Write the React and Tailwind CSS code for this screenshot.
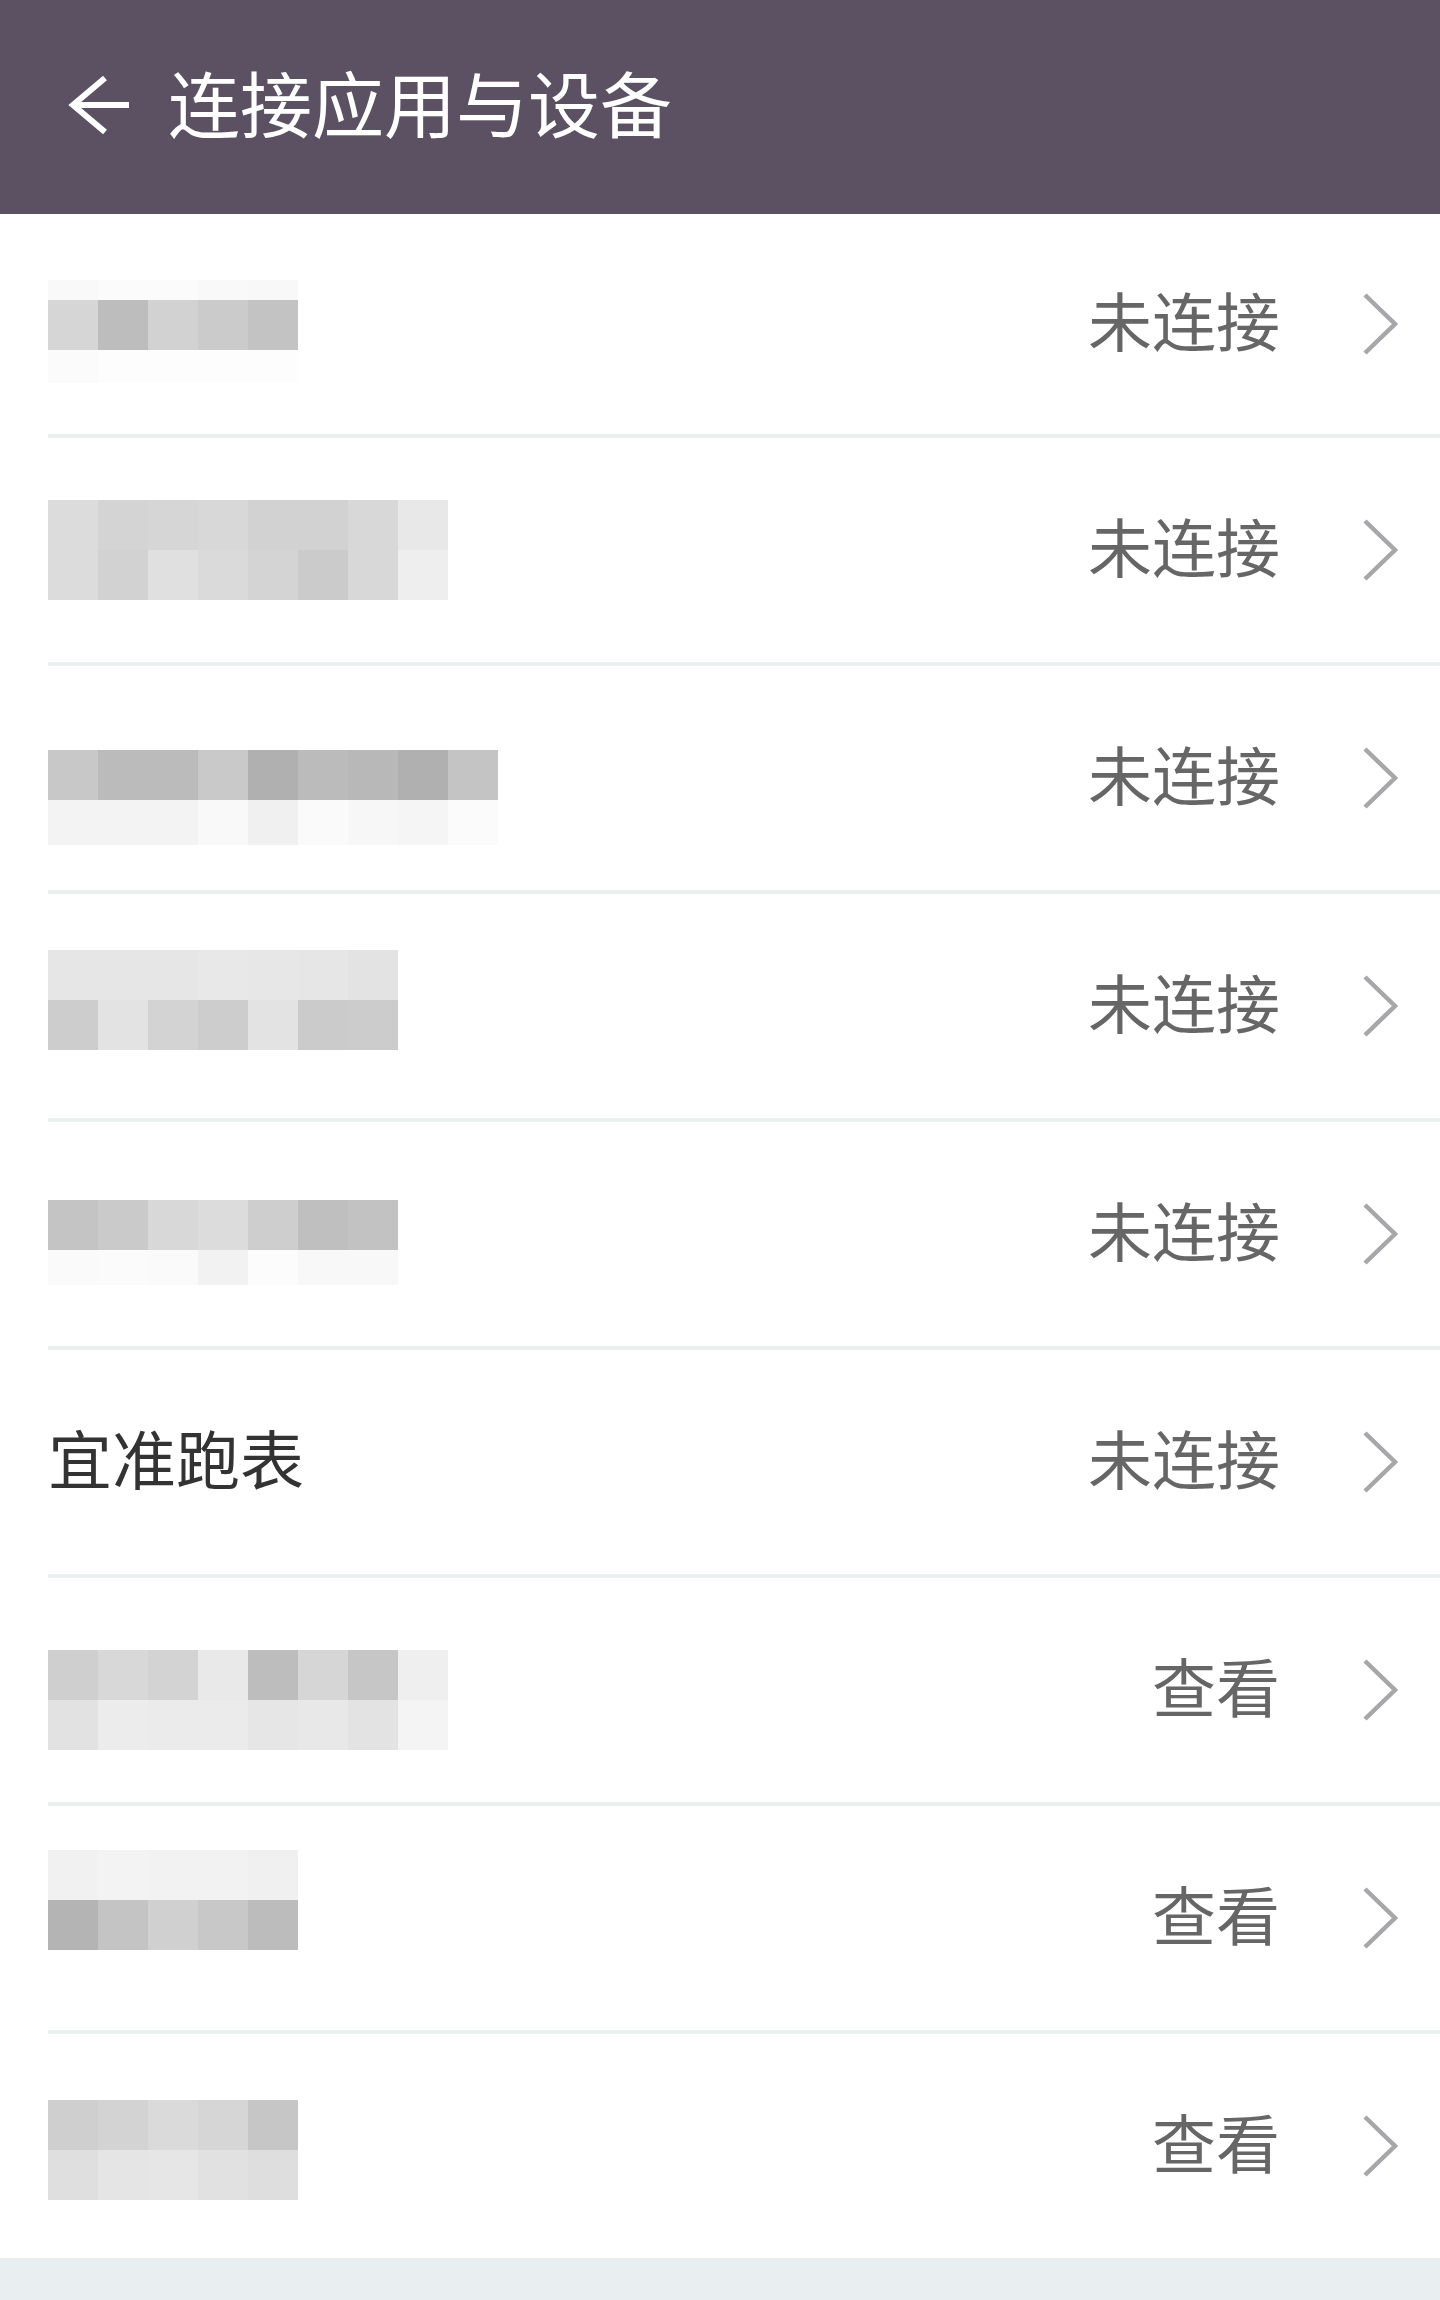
import React from "react";

function Mosaic({ rows, mt, heights }) {
  return (
    <div className={`flex flex-col self-start ${mt}`}>
      {rows.map((r, i) => (
        <div key={i} className="flex">
          {r.map((c, j) => (
            <div
              key={j}
              className="w-[50px]"
              style={{ backgroundColor: c, height: heights ? heights[i] : 50 }}
            />
          ))}
        </div>
      ))}
    </div>
  );
}

function Chevron() {
  return (
    <svg width="36" height="62" viewBox="0 0 36 62" fill="none">
      <path d="M3 2 L33 31 L3 60" stroke="#a6a6ab" strokeWidth="4.5" strokeLinejoin="miter" />
    </svg>
  );
}

function Right({ action }) {
  return (
    <div className="ml-auto flex items-center gap-[82px]">
      <span className="text-[64px] leading-none text-[#666666] mb-[12px]">{action}</span>
      <Chevron />
    </div>
  );
}

export default function App() {
  const items = [
    {
      h: "h-[224px]",
      mt: "mt-[66px]",
      heights: [20, 50, 33],
      rows: [
        ["#f9f9f9", "#fbfbfb", "#fbfbfb", "#f9f9f9", "#f8f8f8"],
        ["#d6d6d6", "#bdbdbd", "#d2d2d2", "#cbcbcb", "#c3c3c3"],
        ["#fbfbfb", "#fdfdfd", "#fdfdfd", "#fdfdfd", "#fdfdfd"],
      ],
      action: "未连接",
    },
    {
      h: "h-[228px]",
      mt: "mt-[62px]",
      rows: [
        ["#dcdcdc", "#d4d4d4", "#d6d6d6", "#d8d8d8", "#d2d2d2", "#d2d2d2", "#d8d8d8", "#e8e8e8"],
        ["#dcdcdc", "#d2d2d2", "#e0e0e0", "#dadada", "#d4d4d4", "#cbcbcb", "#d8d8d8", "#eeeeee"],
      ],
      action: "未连接",
    },
    {
      h: "h-[228px]",
      mt: "mt-[84px]",
      heights: [50, 45],
      rows: [
        ["#c8c8c8", "#bbbbbb", "#bbbbbb", "#c9c9c9", "#b0b0b0", "#bbbbbb", "#b8b8b8", "#b0b0b0", "#c4c4c4"],
        ["#f3f3f3", "#f3f3f3", "#f3f3f3", "#f9f9f9", "#f0f0f0", "#fafafa", "#f7f7f7", "#f5f5f5", "#fbfbfb"],
      ],
      action: "未连接",
    },
    {
      h: "h-[228px]",
      mt: "mt-[56px]",
      rows: [
        ["#e6e6e6", "#e6e6e6", "#e6e6e6", "#e8e8e8", "#e7e7e7", "#e6e6e6", "#e3e3e3"],
        ["#cdcdcd", "#e3e3e3", "#d3d3d3", "#cdcdcd", "#e3e3e3", "#cbcbcb", "#cccccc"],
      ],
      action: "未连接",
    },
    {
      h: "h-[228px]",
      mt: "mt-[78px]",
      heights: [50, 35],
      rows: [
        ["#c4c4c4", "#cacaca", "#d8d8d8", "#dcdcdc", "#cecece", "#bfbfbf", "#c2c2c2"],
        ["#fafafa", "#fbfbfb", "#fafafa", "#f2f2f2", "#fcfcfc", "#f8f8f8", "#f8f8f8"],
      ],
      action: "未连接",
    },
    { h: "h-[228px]", text: "宜准跑表", action: "未连接" },
    {
      h: "h-[228px]",
      mt: "mt-[72px]",
      rows: [
        ["#cfcfcf", "#d8d8d8", "#d3d3d3", "#e9e9e9", "#bdbdbd", "#d6d6d6", "#c6c6c6", "#efefef"],
        ["#e2e2e2", "#ececec", "#ebebeb", "#ebebeb", "#e6e6e6", "#e8e8e8", "#e3e3e3", "#f4f4f4"],
      ],
      action: "查看",
    },
    {
      h: "h-[228px]",
      mt: "mt-[44px]",
      rows: [
        ["#f1f1f1", "#f3f3f3", "#f2f2f2", "#f2f2f2", "#f0f0f0"],
        ["#b4b4b4", "#c4c4c4", "#d0d0d0", "#c8c8c8", "#bcbcbc"],
      ],
      action: "查看",
    },
    {
      h: "h-[224px]",
      mt: "mt-[66px]",
      rows: [
        ["#cfcfcf", "#d3d3d3", "#dadada", "#d6d6d6", "#c6c6c6"],
        ["#dfdfdf", "#e5e5e5", "#e6e6e6", "#e1e1e1", "#dedede"],
      ],
      action: "查看",
      last: true,
    },
  ];

  return (
    <div className="w-[1440px] h-[2300px] bg-white flex flex-col font-['Noto_Sans_CJK_SC',sans-serif] overflow-hidden">
      <header className="h-[214px] shrink-0 bg-[#5b5162] flex items-center">
        <svg className="ml-[68px] mb-[4px]" width="64" height="60" viewBox="0 0 64 60" fill="none">
          <path d="M4 30 H61" stroke="#ffffff" strokeWidth="6" />
          <path d="M37 3 L5 30 L37 57" stroke="#ffffff" strokeWidth="6" strokeLinejoin="miter" />
        </svg>
        <h1 className="ml-[36px] mb-[12px] text-[72px] leading-none font-normal text-white">
          连接应用与设备
        </h1>
      </header>
      {items.map((it, i) => (
        <div
          key={i}
          className={`ml-[48px] ${it.h} shrink-0 flex items-center pr-[42px] ${
            it.last ? "" : "border-b-[4px] border-[#eaeff1]"
          }`}
        >
          {it.text ? (
            <span className="text-[64px] leading-none text-[#333333] mb-[12px]">{it.text}</span>
          ) : (
            <Mosaic rows={it.rows} mt={it.mt} heights={it.heights} />
          )}
          <Right action={it.action} />
        </div>
      ))}
      <div className="flex-1 bg-[#e9eff1]" />
    </div>
  );
}
